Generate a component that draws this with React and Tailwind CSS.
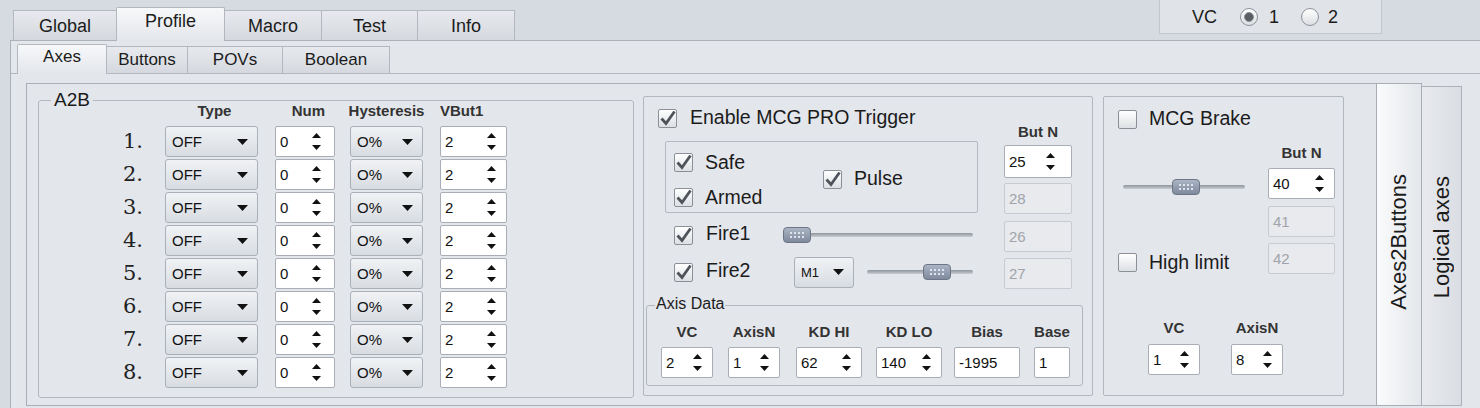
import React from "react";

const SANS = "font-['Liberation_Sans',Arial,sans-serif]";

function Up() {
  return (
    <svg width="9" height="5" viewBox="0 0 9 5" className="block">
      <path d="M0 5 L4.5 0 L9 5 Z" fill="#111" />
    </svg>
  );
}
function Down() {
  return (
    <svg width="9" height="5" viewBox="0 0 9 5" className="block">
      <path d="M0 0 L9 0 L4.5 5 Z" fill="#111" />
    </svg>
  );
}

function Spin({ value, w, h = "h-[31px]", ar = "mr-[10px]", cls = "" }) {
  return (
    <div
      className={`${w} ${h} ${cls} flex items-center bg-white border border-[#a9aeb6] rounded-[2px] pl-[4px] text-[15px] text-[#111] shrink-0`}
    >
      <span className="flex-1 leading-none">{value}</span>
      <span className={`flex flex-col items-center gap-[7px] ${ar}`}>
        <Up />
        <Down />
      </span>
    </div>
  );
}

function Combo({ value, w, text = "text-[15px]", cls = "" }) {
  return (
    <div
      className={`${w} ${cls} h-[31px] flex items-center border border-[#aab0b8] rounded-[3px] bg-linear-to-b from-[#f0f2f5] to-[#d8dce1] pl-[6px] pr-[9px] ${text} text-[#111] shrink-0`}
    >
      <span className="flex-1 leading-none">{value}</span>
      <svg width="11" height="6" viewBox="0 0 11 6" className="block">
        <path d="M0 0 L11 0 L5.5 6 Z" fill="#111" />
      </svg>
    </div>
  );
}

function Field({ value, w, disabled, cls = "" }) {
  return (
    <div
      className={`${w} ${cls} h-[31px] flex items-center border rounded-[2px] pl-[4px] text-[15px] leading-none shrink-0 ${
        disabled
          ? "border-[#c8ccd2] bg-[#e8eaee] text-[#a0a4aa]"
          : "border-[#a9aeb6] bg-white text-[#111]"
      }`}
    >
      {value}
    </div>
  );
}

function Check({ checked }) {
  return (
    <span className="relative block w-[19px] h-[19px] shrink-0 border border-[#8b9097] rounded-[2px] bg-linear-to-b from-white to-[#dde0e4]">
      {checked && (
        <svg
          className="absolute left-0 top-0 overflow-visible"
          width="17"
          height="17"
          viewBox="0 0 17 17"
        >
          <path
            d="M2.5 8.5 L7 13.5 L15.5 1.5"
            fill="none"
            stroke="#4f545b"
            strokeWidth="2.8"
          />
        </svg>
      )}
    </span>
  );
}

function Radio({ checked, cls = "" }) {
  return (
    <span
      className={`w-[18px] h-[18px] rounded-full border border-[#8d9198] bg-linear-to-b from-white to-[#dcdfe3] flex items-center justify-center shrink-0 ${cls}`}
    >
      {checked && (
        <span className="w-[10px] h-[10px] rounded-full bg-[#5a5f66] border border-[#8a8f96]" />
      )}
    </span>
  );
}

function Dots() {
  return (
    <div className="flex gap-[2px]">
      {[0, 1, 2, 3].map((i) => (
        <span key={i} className="block w-[2px] h-[2px] bg-[#dfe4ec]" />
      ))}
    </div>
  );
}

function Slider({ w, thumb, cls = "" }) {
  return (
    <div className={`relative ${w} ${cls} h-[18px] flex items-center shrink-0`}>
      <div className="w-full h-[4px] rounded-full bg-linear-to-b from-[#8f959d] to-[#c9cdd2]" />
      <div
        className={`absolute top-[1px] ${thumb} w-[28px] h-[16px] rounded-[4px] border border-[#6c7687] bg-linear-to-b from-[#aab4c4] to-[#7f8a9d] flex flex-col items-center justify-center gap-[2px]`}
      >
        <Dots />
        <Dots />
      </div>
    </div>
  );
}

function Label({ children, cls = "" }) {
  return (
    <span className={`text-[19.5px] leading-none whitespace-nowrap text-[#1b1b1b] ${cls}`}>
      {children}
    </span>
  );
}

function Head({ children, cls = "" }) {
  return (
    <div
      className={`h-[20px] leading-[20px] text-[15px] font-bold text-[#333] whitespace-nowrap ${cls}`}
    >
      {children}
    </div>
  );
}

const tabBorder = "border border-b-0 border-[#b3b8bf]";
const tabOff = "bg-linear-to-b from-[#e7e9ed] to-[#d5d9df]";
const tabOn = "bg-linear-to-b from-[#f7f8fa] to-[#e3e6eb]";

export default function App() {
  const rows = [1, 2, 3, 4, 5, 6, 7, 8];
  return (
    <div
      className={`w-[1480px] h-[408px] overflow-hidden bg-[#d6dae1] ${SANS} text-[#1b1b1b]`}
    >
      {/* top tab row */}
      <div className="flex h-[40px]">
        <div className="flex items-end pl-[13px]">
          <div
            className={`w-[104px] h-[30px] flex items-center justify-center pt-[2px] text-[18px] ${tabBorder} ${tabOff}`}
          >
            Global
          </div>
          <div
            className={`relative z-10 -ml-px -mb-px w-[109px] h-[34px] flex items-center justify-center pb-[6px] text-[18px] rounded-t-[2px] ${tabBorder} ${tabOn}`}
          >
            Profile
          </div>
          <div
            className={`-ml-px w-[98px] h-[30px] flex items-center justify-center pt-[2px] text-[18px] ${tabBorder} ${tabOff}`}
          >
            Macro
          </div>
          <div
            className={`-ml-px w-[97px] h-[30px] flex items-center justify-center pt-[2px] text-[18px] ${tabBorder} ${tabOff}`}
          >
            Test
          </div>
          <div
            className={`-ml-px w-[98px] h-[30px] flex items-center justify-center pt-[2px] text-[18px] ${tabBorder} ${tabOff}`}
          >
            Info
          </div>
        </div>
        <div className="ml-auto mr-[98px] w-[223px] h-[34px] border border-t-0 border-[#c3c7cd] bg-[#e0e3e8] flex items-center pl-[32px] text-[18px] leading-none">
          <span>VC</span>
          <Radio checked cls="ml-[23px]" />
          <span className="ml-[11px]">1</span>
          <Radio cls="ml-[22px]" />
          <span className="ml-[9px]">2</span>
        </div>
      </div>

      {/* outer panel */}
      <div className="ml-[10px] h-[368px] border-t border-l border-[#adb2b9] bg-[#e3e6eb] flex flex-col">
        {/* sub tabs */}
        <div className="flex items-end h-[32px] pl-[6px]">
          <div
            className={`relative z-10 -mb-px w-[90px] h-[30px] flex items-center justify-center pb-[5px] text-[17px] rounded-t-[2px] ${tabBorder} bg-linear-to-b from-[#f7f8fa] to-[#e3e6eb]`}
          >
            Axes
          </div>
          <div
            className={`-ml-px w-[82px] h-[27px] flex items-center justify-center text-[17px] ${tabBorder} ${tabOff}`}
          >
            Buttons
          </div>
          <div
            className={`-ml-px w-[96px] h-[27px] flex items-center justify-center text-[17px] ${tabBorder} ${tabOff}`}
          >
            POVs
          </div>
          <div
            className={`-ml-px w-[108px] h-[27px] flex items-center justify-center text-[17px] ${tabBorder} ${tabOff}`}
          >
            Boolean
          </div>
        </div>

        {/* sub panel */}
        <div className="flex-1 border-t border-[#b4b9c0] pl-[15px] pt-[9px] flex items-start">
          {/* content panel */}
          <div className="w-[1351px] h-[323px] border border-[#a9aeb6] bg-[#e3e6eb] flex items-start pl-[11px] shrink-0">
            {/* A2B group */}
            <div className="relative mt-[16px] w-[596px] h-[298px] border border-[#b2b7be] rounded-[3px] shrink-0">
              <span className="absolute left-[12px] top-[-12px] px-[3px] bg-[#e3e6eb] text-[19px] leading-[22px]">
                A2B
              </span>
              <div className="flex h-[20px] items-center">
                <span className="w-[104px]" />
                <Head cls="ml-[22px] w-[93px] text-center pl-[6px]">Type</Head>
                <Head cls="ml-[17px] w-[60px] text-right pr-[10px]">Num</Head>
                <Head cls="ml-[15px] w-[73px] flex justify-center">Hysteresis</Head>
                <Head cls="ml-[17px] w-[67px] text-left">VBut1</Head>
              </div>
              <div className="mt-[4px] flex flex-col">
                {rows.map((n) => (
                  <div key={n} className="flex items-center h-[33px]">
                    <span className="w-[104px] text-right font-['DejaVu_Serif',serif] text-[21px] leading-none text-[#222]">
                      {n}.
                    </span>
                    <Combo value="OFF" w="w-[93px]" cls="ml-[22px]" />
                    <Spin value="0" w="w-[60px]" cls="ml-[17px]" ar="mr-[13px]" />
                    <Combo value="O%" w="w-[73px]" cls="ml-[15px]" />
                    <Spin value="2" w="w-[67px]" cls="ml-[17px]" />
                  </div>
                ))}
              </div>
            </div>

            {/* MCG PRO Trigger panel */}
            <div className="ml-[9px] mt-[12px] w-[450px] h-[300px] border border-[#b2b7be] rounded-[2px] shrink-0 flex flex-col">
              <div className="flex">
                <div className="w-[360px] flex flex-col">
                  <div className="mt-[11px] h-[20px] pl-[14px] flex items-center">
                    <Check checked />
                    <Label cls="ml-[13px]">Enable MCG PRO Trigger</Label>
                  </div>
                  <div className="mt-[13px] ml-[21px] w-[313px] h-[72px] border border-[#b5bac1] rounded-[2px] flex">
                    <div className="w-[157px] pl-[8px] flex flex-col">
                      <div className="mt-[11px] h-[19px] flex items-center">
                        <Check checked />
                        <Label cls="ml-[12px]">Safe</Label>
                      </div>
                      <div className="mt-[16px] h-[19px] flex items-center">
                        <Check checked />
                        <Label cls="ml-[12px]">Armed</Label>
                      </div>
                    </div>
                    <div className="self-center mt-[4px] flex items-center">
                      <Check checked />
                      <Label cls="ml-[12px]">Pulse</Label>
                    </div>
                  </div>
                  <div className="mt-[12px] h-[20px] pl-[30px] flex items-center">
                    <Check checked />
                    <span className="ml-[13px] w-[77px]">
                      <Label>Fire1</Label>
                    </span>
                    <Slider w="w-[190px]" thumb="left-0" />
                  </div>
                  <div className="mt-[11px] h-[32px] pl-[30px] flex items-center">
                    <Check checked />
                    <span className="ml-[13px] w-[88px]">
                      <Label>Fire2</Label>
                    </span>
                    <Combo value="M1" w="w-[60px]" text="text-[13px]" />
                    <Slider w="w-[106px]" thumb="left-[56px]" cls="ml-[13px]" />
                  </div>
                </div>
                <div className="w-[68px] flex flex-col">
                  <Head cls="mt-[25px] text-center">But N</Head>
                  <Spin value="25" w="w-[68px]" h="h-[33px]" ar="mr-[16px]" cls="mt-[3px]" />
                  <Field value="28" w="w-[68px]" disabled cls="mt-[5px]" />
                  <Field value="26" w="w-[68px]" disabled cls="mt-[7px]" />
                  <Field value="27" w="w-[68px]" disabled cls="mt-[6px]" />
                </div>
              </div>

              {/* Axis Data */}
              <div className="relative ml-[2px] mt-[16px] w-[437px] h-[81px] border border-[#b2b7be] rounded-[3px]">
                <span className="absolute left-[8px] top-[-11px] px-[1px] bg-[#e3e6eb] text-[16px] leading-[18px]">
                  Axis Data
                </span>
                <div className="flex pl-[14px] pt-[16px]">
                  <div className="w-[52px] flex flex-col items-center">
                    <Head>VC</Head>
                    <Spin value="2" w="w-[52px]" cls="mt-[5px]" />
                  </div>
                  <div className="ml-[15px] w-[52px] flex flex-col items-center">
                    <Head>AxisN</Head>
                    <Spin value="1" w="w-[52px]" cls="mt-[5px]" />
                  </div>
                  <div className="ml-[16px] w-[66px] flex flex-col items-center">
                    <Head>KD HI</Head>
                    <Spin value="62" w="w-[66px]" cls="mt-[5px]" />
                  </div>
                  <div className="ml-[14px] w-[66px] flex flex-col items-center">
                    <Head>KD LO</Head>
                    <Spin value="140" w="w-[66px]" cls="mt-[5px]" />
                  </div>
                  <div className="ml-[12px] w-[66px] flex flex-col items-center">
                    <Head>Bias</Head>
                    <Field value="-1995" w="w-[66px]" cls="mt-[5px]" />
                  </div>
                  <div className="ml-[14px] w-[36px] flex flex-col items-center">
                    <Head>Base</Head>
                    <Field value="1" w="w-[36px]" cls="mt-[5px]" />
                  </div>
                </div>
              </div>
            </div>

            {/* MCG Brake panel */}
            <div className="ml-[10px] mt-[12px] w-[241px] h-[300px] border border-[#b2b7be] rounded-[2px] shrink-0 flex flex-col">
              <div className="mt-[12px] h-[20px] pl-[14px] flex items-center">
                <Check />
                <Label cls="ml-[12px]">MCG Brake</Label>
              </div>
              <div className="flex">
                <div className="w-[164px] flex flex-col">
                  <Slider w="w-[122px]" thumb="left-[49px]" cls="mt-[49px] ml-[19px]" />
                  <div className="mt-[56px] h-[21px] pl-[14px] flex items-center">
                    <Check />
                    <Label cls="ml-[12px]">High limit</Label>
                  </div>
                </div>
                <div className="w-[67px] flex flex-col">
                  <Head cls="mt-[14px] text-center">But N</Head>
                  <Spin value="40" w="w-[67px]" cls="mt-[5px]" />
                  <Field value="41" w="w-[67px]" disabled cls="mt-[7px]" />
                  <Field value="42" w="w-[67px]" disabled cls="mt-[6px]" />
                </div>
              </div>
              <div className="mt-[44px] flex pl-[44px]">
                <div className="w-[52px] flex flex-col items-center">
                  <Head>VC</Head>
                  <Spin value="1" w="w-[52px]" cls="mt-[6px]" />
                </div>
                <div className="ml-[31px] w-[52px] flex flex-col items-center">
                  <Head>AxisN</Head>
                  <Spin value="8" w="w-[52px]" cls="mt-[6px]" />
                </div>
              </div>
            </div>
          </div>

          {/* vertical tabs */}
          <div className="w-[45px] h-[323px] border border-l-0 border-[#a9aeb6] bg-linear-to-r from-[#fafbfc] to-[#e4e7eb] flex items-center justify-center pb-[6px] shrink-0">
            <span className="[writing-mode:vertical-rl] rotate-180 text-[22px] leading-none whitespace-nowrap">
              Axes2Buttons
            </span>
          </div>
          <div className="mt-[3px] w-[40px] h-[320px] border border-l-0 border-[#adb2b9] bg-linear-to-r from-[#e8eaee] to-[#dadde2] flex items-center justify-center pb-[18px] shrink-0">
            <span className="[writing-mode:vertical-rl] rotate-180 text-[22px] leading-none whitespace-nowrap">
              Logical axes
            </span>
          </div>
        </div>
      </div>
    </div>
  );
}
